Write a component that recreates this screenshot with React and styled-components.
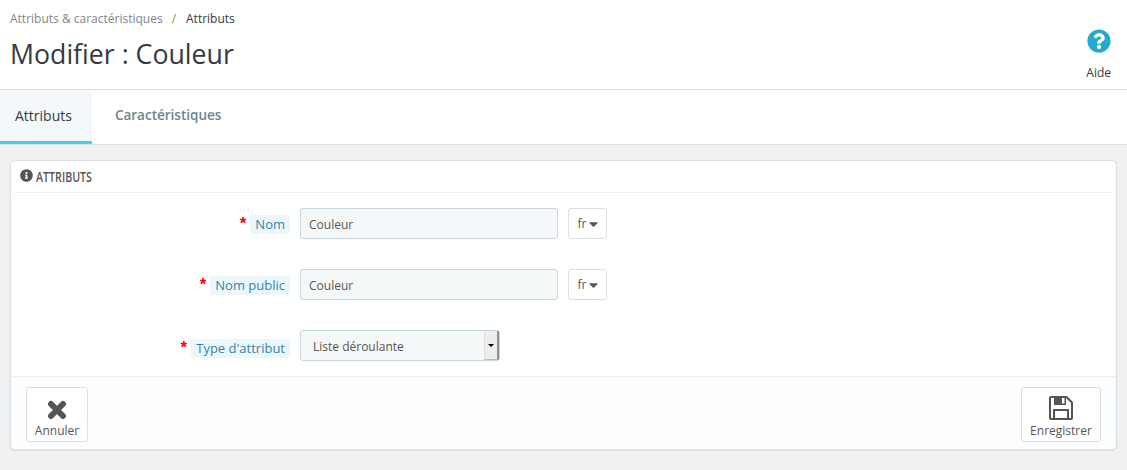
import React from 'react';
import styled, { createGlobalStyle } from 'styled-components';
import { FaQuestionCircle, FaInfoCircle, FaCaretDown } from 'react-icons/fa';

const GlobalStyle = createGlobalStyle`
  html, body {
    margin: 0;
    padding: 0;
    background-color: #eff1f2;
    font-family: "Open Sans", "Liberation Sans", sans-serif;
    color: #363a41;
  }
  * {
    box-sizing: border-box;
  }
`;

const Page = styled.div`
  width: 1127px;
  height: 470px;
  overflow: hidden;
`;

const Header = styled.header`
  height: 90px;
  background-color: #fff;
  border-bottom: 1px solid #dfdfdf;
  padding: 11px 16px 0 10px;
  display: flex;
  justify-content: space-between;
`;

const Breadcrumb = styled.div`
  display: flex;
  font-size: 12px;
  line-height: 16px;
  color: #7f8489;
`;

const BreadcrumbSep = styled.span`
  color: #6c9a3a;
  margin: 0 10px 0 9px;
`;

const BreadcrumbCurrent = styled.span`
  color: #363a41;
`;

const Title = styled.h1`
  margin: 9px 0 0;
  font-size: 26.7px;
  line-height: 36px;
  font-weight: 400;
  color: #363a41;
`;

const HelpLink = styled.a`
  display: flex;
  flex-direction: column;
  align-items: center;
  font-size: 12px;
  color: #363a41;
  padding-top: 18px;
  gap: 12px;
  line-height: 16px;
  svg {
    width: 24px;
    height: 24px;
    color: #25a9cf;
  }
`;

const Tabs = styled.nav`
  height: 55px;
  display: flex;
  background-color: #fff;
  border-bottom: 1px solid #dfdfdf;
`;

const Tab = styled.div`
  height: 54px;
  padding: ${props => (props.$active ? '0 20px 1px 15px' : '0 23px 1px 23px')};
  display: flex;
  align-items: center;
  font-size: ${props => (props.$active ? '14px' : '13.5px')};
  font-weight: ${props => (props.$active ? 400 : 600)};
  color: ${props => (props.$active ? '#363a41' : '#6c868e')};
  background-color: ${props => (props.$active ? '#f4f8fb' : '#fff')};
  border-bottom: 3px solid ${props => (props.$active ? '#3ed2f0' : 'transparent')};
`;

const Content = styled.main`
  padding: 15px 10px 0;
`;

const Panel = styled.section`
  background-color: #fff;
  border: 1px solid #dcdfe1;
  border-radius: 5px;
  box-shadow: 0 1px 2px rgba(0, 0, 0, 0.08);
  height: 290px;
  display: flex;
  flex-direction: column;
`;

const PanelHeading = styled.div`
  margin: 0 4px;
  padding: 0 0 2px 5px;
  height: 32px;
  display: flex;
  align-items: center;
  gap: 3px;
  border-bottom: 1px solid #eeeeee;
  color: #555;
  svg {
    width: 13px;
    height: 13px;
  }
`;

const HeadingText = styled.span`
  font-family: "Open Sans", sans-serif;
  font-weight: 600;
  font-size: 14.8px;
  display: inline-block;
  transform: scaleX(0.72);
  transform-origin: left center;
  text-transform: uppercase;
`;

const Form = styled.div`
  flex: 1;
  padding-top: 15px;
  display: flex;
  flex-direction: column;
  gap: 30px;
`;

const Row = styled.div`
  display: grid;
  grid-template-columns: 279px 258px auto;
  column-gap: 10px;
  align-items: center;
  justify-content: start;
`;

const LabelCell = styled.div`
  display: flex;
  justify-content: flex-end;
  align-items: center;
  gap: 4px;
  padding-top: ${props => props.$drop || '2px'};
`;

const Required = styled.span`
  font-family: "Liberation Sans", sans-serif;
  font-weight: 700;
  color: #ff0000;
  font-size: 17px;
  line-height: 16px;
  margin-top: -1px;
`;

const Label = styled.label`
  font-size: 13px;
  line-height: 19px;
  padding: 0 5px;
  color: #2f86ab;
  background-color: #edf6fb;
  border-radius: 3px;
`;

const TextInput = styled.div`
  height: 31px;
  padding: 1px 8px 0;
  display: flex;
  align-items: center;
  font-size: 12px;
  color: #555;
  background-color: #f5f8f9;
  border: 1px solid #c7d6db;
  border-radius: 3px;
`;

const LangButton = styled.div`
  width: 39px;
  height: 31px;
  display: flex;
  align-items: center;
  justify-content: center;
  gap: 3px;
  padding-left: 1px;
  font-size: 12px;
  color: #555;
  background-color: #fff;
  border: 1px solid #dcdfe1;
  border-radius: 3px;
  svg {
    width: 9px;
    height: 14px;
  }
`;

const SelectBox = styled.div`
  width: 200px;
  height: 31px;
  display: flex;
  justify-content: space-between;
  font-size: 12px;
  color: #555;
  background-color: #f5f8f9;
  border: 1px solid #c7d6db;
  border-radius: 3px;
  padding-left: 12px;
  align-items: center;
`;

const SelectLabel = styled.span`
  padding-top: 2px;
`;

const SelectArrow = styled.span`
  width: 15px;
  height: 29px;
  background-color: #ededed;
  border-left: 1px solid #d9dfe1;
  border-right: 2px solid #8f8f8f;
  border-bottom: 1px solid #bdbdbd;
  display: flex;
  align-items: center;
  justify-content: center;
  &::after {
    content: '';
    border-left: 3px solid transparent;
    border-right: 3px solid transparent;
    border-top: 3px solid #000;
  }
`;

const Footer = styled.footer`
  height: 73px;
  padding: 10px 15px 0;
  display: flex;
  justify-content: space-between;
  background-color: #fcfdfe;
  border-top: 1px solid #eeeeee;
  border-radius: 0 0 5px 5px;
`;

const ActionButton = styled.button`
  height: 55px;
  padding: 0 0 1px;
  width: ${props => props.$width};
  display: flex;
  flex-direction: column;
  align-items: center;
  justify-content: flex-end;
  font-family: inherit;
  font-size: 12px;
  line-height: 18px;
  color: #555;
  background-color: #fff;
  border: 1px solid #dcdfe1;
  border-radius: 3px;
  svg {
    color: #555;
    margin-bottom: 2px;
  }
`;

const CloseIcon = () => (
  <svg width="20" height="20" viewBox="0 0 20 20">
    <path d="M4 4 L16 16 M16 4 L4 16" stroke="currentColor" strokeWidth="6" strokeLinecap="round" fill="none" />
  </svg>
);

const SaveIcon = () => (
  <svg width="24" height="24" viewBox="0 0 24 24">
    <path
      fill="currentColor"
      fillRule="evenodd"
      d="M2 0 H18 L24 6 V22 a2 2 0 0 1 -2 2 H2 a2 2 0 0 1 -2 -2 V2 a2 2 0 0 1 2 -2 Z
         M2 2 V22 H4 V13 H20 V22 H22 V7 L17 2 V9 H5 V2 Z
         M6 15 V22 H18 V15 Z
         M13 2 V7.5 H15.5 V2 Z"
    />
  </svg>
);

const App = () => (
  <Page>
    <GlobalStyle />
    <Header>
      <div>
        <Breadcrumb>
          <span>Attributs &amp; caractéristiques</span>
          <BreadcrumbSep>/</BreadcrumbSep>
          <BreadcrumbCurrent>Attributs</BreadcrumbCurrent>
        </Breadcrumb>
        <Title>Modifier : Couleur</Title>
      </div>
      <HelpLink>
        <FaQuestionCircle />
        Aide
      </HelpLink>
    </Header>
    <Tabs>
      <Tab $active>Attributs</Tab>
      <Tab>Caractéristiques</Tab>
    </Tabs>
    <Content>
      <Panel>
        <PanelHeading>
          <FaInfoCircle />
          <HeadingText>Attributs</HeadingText>
        </PanelHeading>
        <Form>
          <Row>
            <LabelCell>
              <Required>*</Required>
              <Label>Nom</Label>
            </LabelCell>
            <TextInput>Couleur</TextInput>
            <LangButton>fr <FaCaretDown /></LangButton>
          </Row>
          <Row>
            <LabelCell>
              <Required>*</Required>
              <Label>Nom public</Label>
            </LabelCell>
            <TextInput>Couleur</TextInput>
            <LangButton>fr <FaCaretDown /></LangButton>
          </Row>
          <Row>
            <LabelCell $drop="5px">
              <Required>*</Required>
              <Label>Type d'attribut</Label>
            </LabelCell>
            <SelectBox>
              <SelectLabel>Liste déroulante</SelectLabel>
              <SelectArrow />
            </SelectBox>
          </Row>
        </Form>
        <Footer>
          <ActionButton $width="62px">
            <CloseIcon />
            Annuler
          </ActionButton>
          <ActionButton $width="80px">
            <SaveIcon />
            Enregistrer
          </ActionButton>
        </Footer>
      </Panel>
    </Content>
  </Page>
);

export default App;
